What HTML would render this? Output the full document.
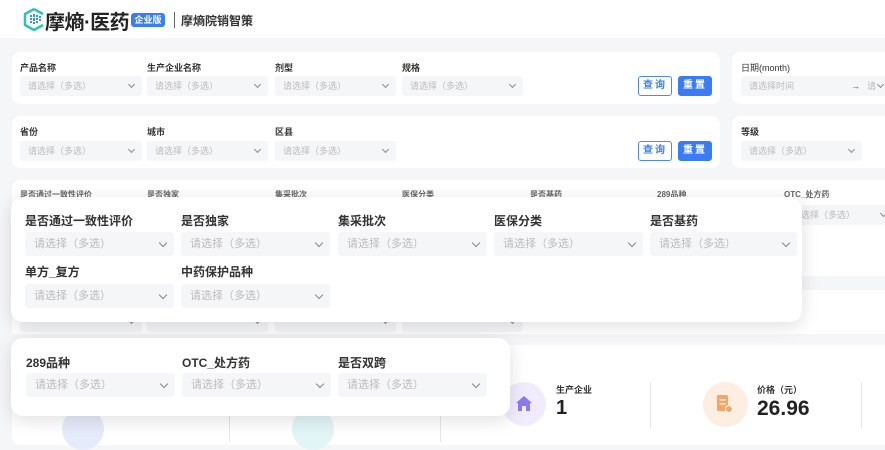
<!DOCTYPE html>
<html><head><meta charset="utf-8"><style>
*{box-sizing:border-box;margin:0;padding:0}
body{width:885px;height:442px;overflow:hidden;background:#f5f6f8;font-family:"Liberation Sans","Noto Sans CJK SC",sans-serif;position:relative}
.abs{position:absolute}
.card{position:absolute;background:#fff;border-radius:8px}
.lb{position:absolute;font-size:9px;color:#333;font-weight:bold}
.sel{position:absolute;height:20px;background:#f5f6f7;border-radius:3px;font-size:9px;color:#bbb;line-height:20px;padding-left:8px}
.sel:after{content:"";position:absolute;right:8px;top:6px;width:4px;height:4px;border-right:1px solid #888;border-bottom:1px solid #888;transform:rotate(45deg)}
.big .lb{font-size:12px}
.big .sel{height:24px;line-height:24px;font-size:11px;padding-left:9px}
.big .sel:after{top:8px;width:5px;height:5px}
.btn{position:absolute;width:34px;height:20px;border-radius:3px;font-size:10px;text-align:center;line-height:18px;font-weight:bold;letter-spacing:2px}
.b1{border:1px solid #4d88f5;color:#3b7cf5;background:#fff}
.b2{background:#3b7cf5;color:#fff;border:1px solid #3b7cf5}
.pop{position:absolute;background:#fff;border-radius:12px;box-shadow:0 4px 18px rgba(0,0,0,.13)}
.vl{position:absolute;width:1px;background:#e6e6e6}
</style></head><body>
<div class="abs" style="left:0;top:0;width:885px;height:38px;background:#fff"></div>
<svg class="abs" style="left:23px;top:8px" width="22" height="23" viewBox="0 0 22 23"><path d="M11 1 L20 6 M11 1 L2 6 L2 17 L11 22 L20 17" fill="none" stroke="#2cc4b0" stroke-width="2.5"/><g fill="#3b8ff0"><rect x="7" y="7" width="2" height="2"/><rect x="10" y="6" width="2" height="3"/><rect x="13" y="7" width="2" height="2"/><rect x="16" y="8" width="2" height="2"/><rect x="7" y="10" width="2" height="2"/><rect x="10" y="10" width="2" height="3"/><rect x="13" y="10" width="2" height="2"/><rect x="16" y="11" width="2" height="2"/><rect x="7" y="13" width="2" height="2"/><rect x="10" y="14" width="2" height="2"/><rect x="13" y="13" width="2" height="2"/></g></svg>
<div class="abs" style="left:45px;top:6px;font-size:20px;font-weight:bold;color:#222;letter-spacing:-0.5px">摩熵·医药</div>
<div class="abs" style="left:131px;top:13px;width:34px;height:14px;background:#3a7ef5;border-radius:3px;color:#fff;font-size:9px;font-weight:bold;text-align:center;line-height:14px">企业版</div>
<div class="abs" style="left:174px;top:12px;width:1px;height:16px;background:#666"></div>
<div class="abs" style="left:181px;top:12px;font-size:12px;font-weight:bold;color:#333">摩熵院销智策</div>

<div class="card" style="left:12px;top:52px;width:708px;height:52px"></div>
<div class="lb" style="left:20px;top:61px">产品名称</div><div class="lb" style="left:147px;top:61px">生产企业名称</div><div class="lb" style="left:275px;top:61px">剂型</div><div class="lb" style="left:402px;top:61px">规格</div>
<div class="sel" style="left:20px;top:76px;width:122px">请选择（多选）</div><div class="sel" style="left:147px;top:76px;width:121px">请选择（多选）</div><div class="sel" style="left:275px;top:76px;width:121px">请选择（多选）</div><div class="sel" style="left:402px;top:76px;width:121px">请选择（多选）</div>
<div class="btn b1" style="left:638px;top:76px">查询</div><div class="btn b2" style="left:678px;top:76px">重置</div>
<div class="card" style="left:732px;top:52px;width:160px;height:52px"></div>
<div class="lb" style="left:741px;top:61px;font-weight:normal">日期(month)</div>
<div class="sel" style="left:741px;top:76px;width:150px;background:#f5f6f7">请选择时间<span style="position:absolute;left:110px;color:#555">→</span><span style="position:absolute;left:126px">请</span></div>

<div class="card" style="left:12px;top:116px;width:708px;height:52px"></div>
<div class="lb" style="left:20px;top:125px">省份</div><div class="lb" style="left:147px;top:125px">城市</div><div class="lb" style="left:275px;top:125px">区县</div>
<div class="sel" style="left:20px;top:141px;width:122px">请选择（多选）</div><div class="sel" style="left:147px;top:141px;width:121px">请选择（多选）</div><div class="sel" style="left:275px;top:141px;width:121px">请选择（多选）</div>
<div class="btn b1" style="left:638px;top:141px">查询</div><div class="btn b2" style="left:678px;top:141px">重置</div>
<div class="card" style="left:732px;top:116px;width:160px;height:52px"></div>
<div class="lb" style="left:741px;top:125px">等级</div>
<div class="sel" style="left:741px;top:141px;width:121px">请选择（多选）</div>

<div class="card" style="left:12px;top:180px;width:880px;height:96px"></div>
<div class="lb" style="left:20px;top:189px;font-size:8px;color:#666">是否通过一致性评价</div><div class="lb" style="left:147px;top:189px;font-size:8px;color:#666">是否独家</div><div class="lb" style="left:275px;top:189px;font-size:8px;color:#666">集采批次</div><div class="lb" style="left:402px;top:189px;font-size:8px;color:#666">医保分类</div><div class="lb" style="left:530px;top:189px;font-size:8px;color:#666">是否基药</div><div class="lb" style="left:657px;top:189px;font-size:8px;color:#666">289品种</div><div class="lb" style="left:784px;top:189px;font-size:8px;color:#666">OTC_处方药</div>
<div class="sel" style="left:784px;top:205px;width:110px">请选择（多选）</div>
<div class="card" style="left:12px;top:290px;width:880px;height:44px;border-radius:0"></div>
<div class="sel" style="left:20px;top:312px;width:122px;font-size:7px"></div><div class="sel" style="left:147px;top:312px;width:121px"></div><div class="sel" style="left:275px;top:312px;width:121px"></div><div class="sel" style="left:402px;top:312px;width:121px"></div>
<div class="card" style="left:12px;top:345px;width:880px;height:100px"></div>
<div class="abs" style="left:62px;top:408px;width:42px;height:42px;border-radius:50%;background:#e5ebfb"></div>
<div class="abs" style="left:292px;top:408px;width:42px;height:42px;border-radius:50%;background:#e2f5f6"></div>
<div class="vl" style="left:229px;top:382px;height:60px"></div><div class="vl" style="left:440px;top:382px;height:60px"></div>
<div class="abs" style="left:502px;top:382px;width:44px;height:44px;border-radius:50%;background:#f0ecfd"></div>
<svg class="abs" style="left:515px;top:395px" width="18" height="17" viewBox="0 0 18 17"><path d="M9 1 L17 8 L15 8 L15 16 L11 16 L11 11 L7 11 L7 16 L3 16 L3 8 L1 8 Z" fill="#8a7cf0"/></svg>
<div class="abs" style="left:556px;top:383px;font-size:9px;color:#333;font-weight:bold">生产企业</div>
<div class="abs" style="left:556px;top:397px;font-size:20px;color:#222;font-weight:bold">1</div>
<div class="vl" style="left:650px;top:382px;height:46px"></div>
<div class="abs" style="left:703px;top:382px;width:45px;height:45px;border-radius:50%;background:#fdeee2"></div>
<svg class="abs" style="left:716px;top:394px" width="18" height="20" viewBox="0 0 18 20"><rect x="1" y="1" width="11" height="16" rx="1.5" fill="#f9a465"/><rect x="3.5" y="5" width="6" height="1.5" fill="#fff"/><rect x="3.5" y="9" width="6" height="1.5" fill="#fff"/><circle cx="13" cy="15" r="3.5" fill="#f9a465" stroke="#fff" stroke-width="1"/></svg>
<div class="abs" style="left:757px;top:383px;font-size:9px;color:#333;font-weight:bold">价格（元）</div>
<div class="abs" style="left:757px;top:397px;font-size:21px;color:#222;font-weight:bold">26.96</div>
<div class="vl" style="left:861px;top:382px;height:46px"></div>

<div class="pop big" style="left:11px;top:197px;width:791px;height:125px">
<div class="lb" style="left:14px;top:15px">是否通过一致性评价</div><div class="lb" style="left:170px;top:15px">是否独家</div><div class="lb" style="left:327px;top:15px">集采批次</div><div class="lb" style="left:483px;top:15px">医保分类</div><div class="lb" style="left:639px;top:15px">是否基药</div>
<div class="sel" style="left:14px;top:35px;width:149px">请选择（多选）</div><div class="sel" style="left:170px;top:35px;width:149px">请选择（多选）</div><div class="sel" style="left:327px;top:35px;width:149px">请选择（多选）</div><div class="sel" style="left:483px;top:35px;width:149px">请选择（多选）</div><div class="sel" style="left:639px;top:35px;width:147px">请选择（多选）</div>
<div class="lb" style="left:14px;top:66px">单方_复方</div><div class="lb" style="left:170px;top:66px">中药保护品种</div>
<div class="sel" style="left:14px;top:87px;width:149px">请选择（多选）</div><div class="sel" style="left:170px;top:87px;width:149px">请选择（多选）</div>
</div>
<div class="pop big" style="left:11px;top:338px;width:499px;height:78px">
<div class="lb" style="left:15px;top:16px">289品种</div><div class="lb" style="left:171px;top:16px">OTC_处方药</div><div class="lb" style="left:327px;top:16px">是否双跨</div>
<div class="sel" style="left:15px;top:35px;width:149px">请选择（多选）</div><div class="sel" style="left:171px;top:35px;width:149px">请选择（多选）</div><div class="sel" style="left:327px;top:35px;width:149px">请选择（多选）</div>
</div>
</body></html>
